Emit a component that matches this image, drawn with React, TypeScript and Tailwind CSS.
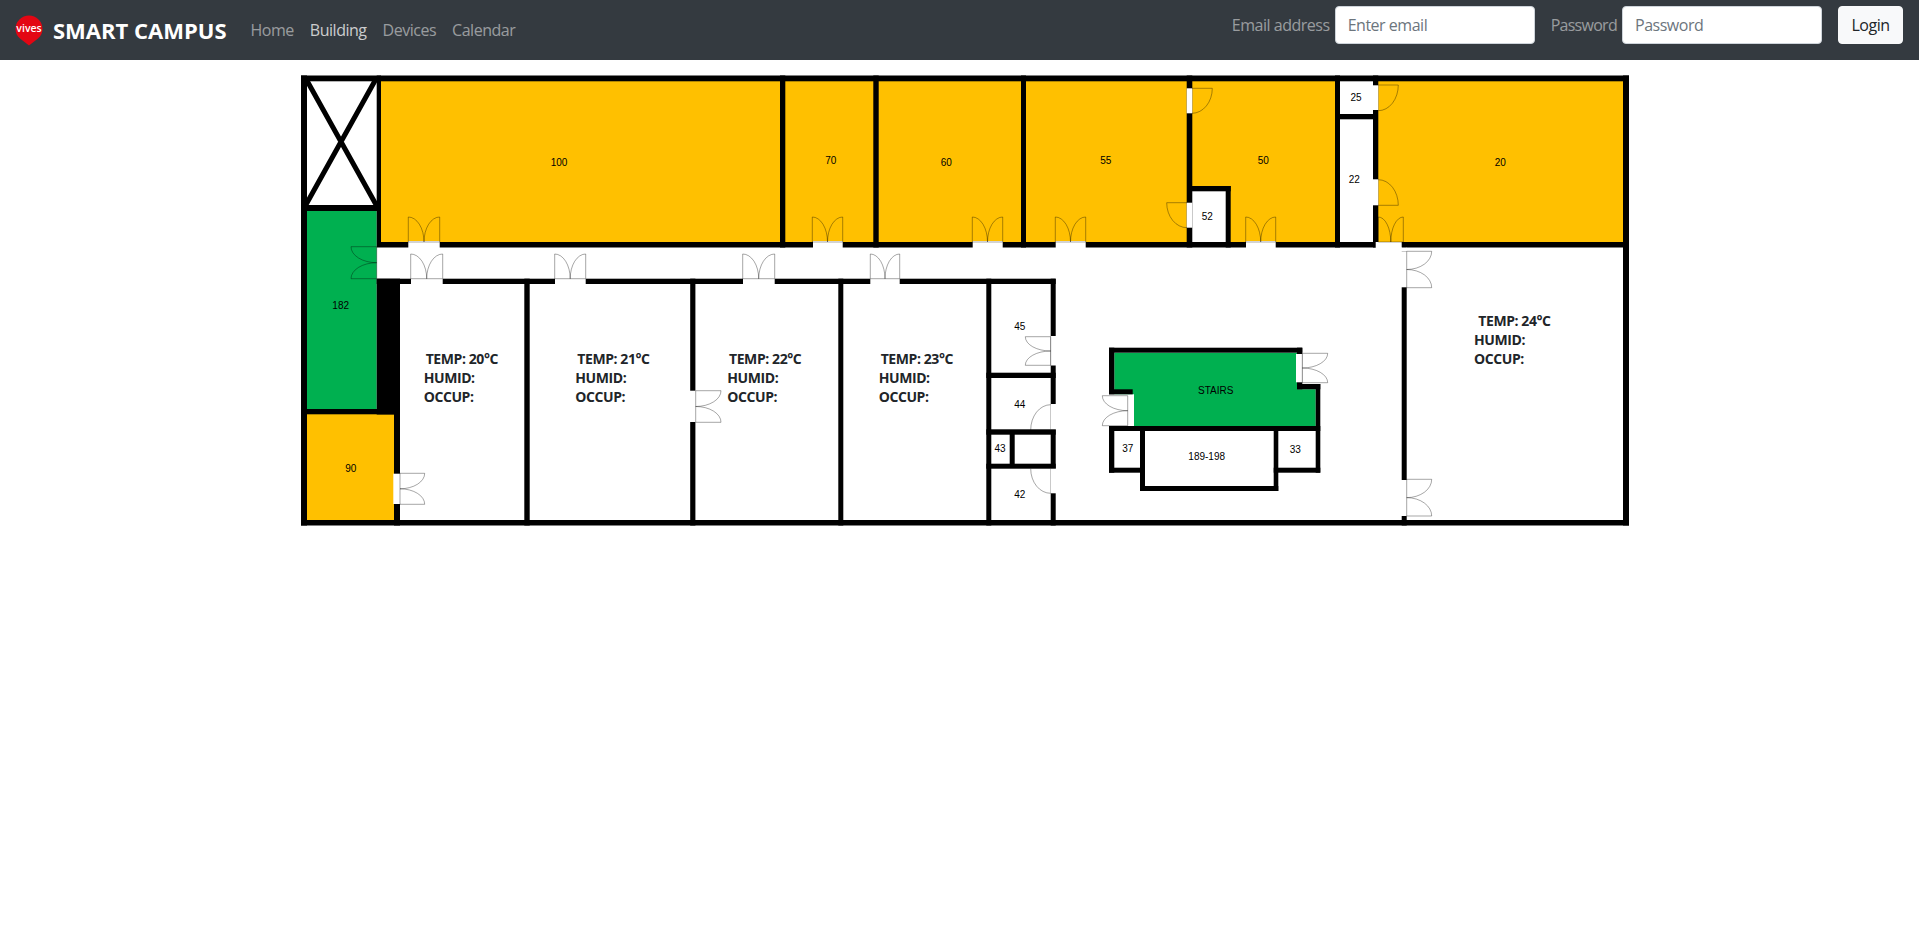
// Smart campus building page: navbar + floor plan drawing
type Box = [number, number, number, number];

const yellow: Box[] = [
  [381, 81, 1335, 242],
  [1378, 81, 1623, 242],
  [307, 414, 394, 520],
];

// black walls as x0, y0, x1, y1
const walls: Box[] = [
  [301, 75.5, 1629, 81.3],
  [301, 520, 1629, 525.5],
  [301, 75.5, 307, 525.5],
  [1623, 75.5, 1629, 525.5],
  [301, 205, 381, 211],
  [376.7, 75.5, 381, 247.5],
  [381, 242, 1629, 247.5],
  [780, 75.5, 785.3, 247.5],
  [873.3, 75.5, 878.7, 247.5],
  [1021, 75.5, 1026, 247.5],
  [1186.7, 75.5, 1192.3, 247.5],
  [1192, 186, 1230.7, 191.3],
  [1225.7, 186, 1230.7, 247.5],
  [1335, 75.5, 1340, 247.5],
  [1340, 114, 1378, 119.3],
  [1373, 75.5, 1378.3, 247.5],
  [1401.7, 242, 1406.7, 525.5],
  // corridor south wall
  [376.7, 278.7, 1055.7, 284],
  [376.7, 278.7, 400, 414.5],
  [307, 409, 400, 414.3],
  [394, 409, 400, 525.5],
  [524.3, 278.7, 529.7, 525.5],
  [690.2, 278.7, 695.4, 525.5],
  [838.3, 278.7, 843.3, 525.5],
  [986.3, 278.7, 991.3, 525.5],
  [1050.7, 278.7, 1055.7, 525.5],
  [986.3, 372.7, 1055.7, 378],
  [986.3, 429.3, 1055.7, 434.7],
  [986.3, 463.7, 1055.7, 468.7],
  [1009.7, 430, 1014.7, 468],
  // stair core
  [1109, 347.7, 1302.3, 352.7],
  [1109, 347.7, 1114.3, 394.3],
  [1109, 389.3, 1132.7, 394.3],
  [1297, 347.7, 1302.3, 389.3],
  [1297, 384, 1320.3, 389.3],
  [1315.7, 384, 1320.3, 472.7],
  [1109, 426, 1320.3, 431],
  [1109, 426, 1114.3, 472.7],
  [1109, 467.7, 1145, 472.7],
  [1140, 426, 1145, 491],
  [1140, 486, 1278.3, 491],
  [1273.7, 426, 1278.3, 491],
  [1273.7, 467.7, 1320.3, 472.7],
];

// openings cut out of the walls
const gaps: Box[] = [
  [408.3, 241, 439.7, 248],
  [813, 241, 842.7, 248],
  [972.7, 241, 1002.7, 248],
  [1055.7, 241, 1085.7, 248],
  [1246, 241, 1275.7, 248],
  [1375.7, 242, 1401.7, 248],
  [1401, 247.5, 1407, 251.3],
  [411, 278, 442.7, 284.5],
  [555, 278, 585.7, 284.5],
  [743, 278, 774.7, 284.5],
  [870.3, 278, 899.7, 284.5],
  [1186.7, 88.3, 1192.3, 113.3],
  [1186.7, 202.7, 1192.3, 227.7],
  [1373, 85.3, 1378.3, 110],
  [1373, 179.3, 1378.3, 205.3],
  [1401, 251.3, 1407, 287.3],
  [1401, 480, 1407, 516],
  [393.3, 473.7, 400, 504],
  [690, 390.7, 696, 422],
  [1050.7, 336, 1056, 365.5],
  [1050.7, 404, 1056, 429.3],
  [1050.7, 468.7, 1056, 493.3],
  [1296, 354, 1302.5, 382.3],
  [1127.7, 396, 1134, 425.5],
];

const upDoors: Box[] = [
  [408.3, 217, 439.7, 242],
  [812.3, 217, 842.7, 242],
  [972.3, 217, 1002.7, 242],
  [1055.3, 217, 1085.7, 242],
  [1245.7, 217, 1275.7, 242],
  [1378.3, 217, 1403.3, 242],
  [410.7, 254, 442.7, 278.7],
  [554.7, 254, 585.7, 278.7],
  [742.7, 254, 774.7, 278.7],
  [870.3, 254, 899.7, 278.7],
];

// hinge side x, far x, top y, bottom y
const sideDoors: Box[] = [
  [376.7, 351, 246.7, 278.7],
  [400, 424.7, 473.3, 504.3],
  [695.7, 721, 390.7, 422.3],
  [1050.7, 1025.3, 336.7, 365.3],
  [1302.3, 1327.7, 353.3, 382.7],
  [1127.7, 1102.3, 395.7, 425.7],
  [1406.7, 1431.7, 251.3, 287.7],
  [1406.7, 1431.7, 479.3, 516],
];

const singleDoors = [
  "M1192 88.3H1212.3A20.3 25 0 0 1 1192 113.3",
  "M1187 202.7H1166.7A20.3 25 0 0 0 1187 227.7",
  "M1378.3 85H1398.3A20 25.7 0 0 1 1378.3 110.7",
  "M1378.3 179.7A20 25.6 0 0 1 1398.3 205.3H1378.3",
  "M1050.7 404.7A20 25.3 0 0 0 1030.7 430",
  "M1030.7 468.7A20 24.6 0 0 0 1050.7 493.3",
];

const labels: [string, number, number][] = [
  ["100", 559, 162.7],
  ["182", 340.7, 305.7],
  ["90", 350.7, 468.7],
  ["70", 830.7, 160.3],
  ["60", 946.3, 162.3],
  ["55", 1105.7, 160.3],
  ["50", 1263.3, 160.3],
  ["52", 1207.3, 216.3],
  ["25", 1356, 97.3],
  ["22", 1354.3, 179.3],
  ["20", 1500.3, 162.3],
  ["45", 1019.7, 326.3],
  ["44", 1019.7, 404.7],
  ["43", 1000, 448.3],
  ["42", 1019.7, 494.3],
  ["STAIRS", 1215.7, 390.3],
  ["37", 1127.7, 448.3],
  ["33", 1295.3, 449.3],
  ["189-198", 1206.7, 456.7],
];

// x of TEMP, x of the other two lines, y of first line, temperature
const readings: [number, number, number, string][] = [
  [425.7, 423.7, 364, "20"],
  [577.3, 575.3, 364, "21"],
  [729, 727.3, 364, "22"],
  [880.7, 878.7, 364, "23"],
  [1478.3, 1474, 326, "24"],
];

function Rect({ b, fill }: { b: Box; fill: string }) {
  return <rect x={b[0]} y={b[1]} width={b[2] - b[0]} height={b[3] - b[1]} fill={fill} />;
}

function FloorPlan() {
  return (
    <svg
      viewBox="300 75 1332 452"
      width={1332}
      height={452}
      className="block ml-[300px] mt-[15px] font-['Liberation_Sans',sans-serif]"
    >
      {yellow.map((b, i) => (
        <Rect key={i} b={b} fill="#FFC000" />
      ))}
      <path d="M307 211H376.7V409H307Z" fill="#00B050" />
      <path
        d="M1114.3 352.7H1297V389.3H1315.7V426H1134V394.3H1114.3Z"
        fill="#00B050"
      />
      <rect x={1192} y={191} width={34} height={51} fill="#fff" />
      {walls.map((b, i) => (
        <Rect key={i} b={b} fill="#000" />
      ))}
      <path d="M305.5 78L376.5 205.5M376.5 78L305.5 205.5" stroke="#000" strokeWidth={5} />
      {gaps.map((b, i) => (
        <Rect key={i} b={b} fill="#fff" />
      ))}

      <g fill="none" stroke="#000" strokeOpacity={0.35} strokeWidth={1}>
        {upDoors.map(([x0, y0, x1, y1], i) => {
          const rx = (x1 - x0) / 2;
          const ry = y1 - y0;
          return (
            <path
              key={i}
              d={`M${x0} ${y1}V${y0}A${rx} ${ry} 0 0 1 ${x0 + rx} ${y1}M${x1} ${y1}V${y0}A${rx} ${ry} 0 0 0 ${x0 + rx} ${y1}M${x0} ${y1}H${x1}`}
            />
          );
        })}
        {sideDoors.map(([xw, xf, y0, y1], i) => {
          const rx = Math.abs(xw - xf);
          const ry = (y1 - y0) / 2;
          const s = xf < xw ? 0 : 1;
          return (
            <path
              key={i}
              d={`M${xw} ${y0}H${xf}A${rx} ${ry} 0 0 ${s} ${xw} ${y0 + ry}M${xw} ${y1}H${xf}A${rx} ${ry} 0 0 ${1 - s} ${xw} ${y0 + ry}M${xw} ${y0}V${y1}`}
            />
          );
        })}
        {singleDoors.map((d, i) => (
          <path key={i} d={d} />
        ))}
      </g>

      {labels.map(([t, x, y]) => (
        <text key={t} x={x} y={y} textAnchor="middle" dominantBaseline="central" className="text-[10px] fill-black">
          {t}
        </text>
      ))}

      <g className="font-['Open_Sans',sans-serif] font-bold text-[14px] tracking-[-0.03em] fill-[#212529]">
        {readings.map(([tx, x, y, temp]) => (
          <g key={temp}>
            <text x={tx} y={y}>{`TEMP: ${temp}°C`}</text>
            <text x={x} y={y + 19}>HUMID:</text>
            <text x={x} y={y + 38}>OCCUP:</text>
          </g>
        ))}
      </g>
    </svg>
  );
}

function Logo() {
  return (
    <svg width={28} height={31} viewBox="0 0 28 31" className="block">
      <path
        d="M14 30.5L5 23.5C2 21 0.5 17.5 0.5 14A13.5 13.5 0 0 1 27.5 14C27.5 17.5 26 21 23 23.5Z"
        fill="#E30613"
      />
      <text x={14} y={16.5} textAnchor="middle" fill="#fff" className="text-[10.5px] font-semibold">
        vives
      </text>
    </svg>
  );
}

export default function App() {
  return (
    <div className="min-h-[945px] bg-white font-['Open_Sans',sans-serif] text-[16px]">
      <nav className="h-[60px] bg-[#343a40] flex items-center pl-[15px] pr-4">
        <div className="flex items-center gap-[10px] mr-4">
          <Logo />
          <span className="text-white font-bold text-[22px]">SMART CAMPUS</span>
        </div>
        <div className="flex items-center tracking-[-0.03em]">
          <a className="px-2 text-white/50">Home</a>
          <a className="px-2 text-white/75">Building</a>
          <a className="px-2 text-white/50">Devices</a>
          <a className="px-2 text-white/50">Calendar</a>
        </div>

        <form className="ml-auto mb-[10px] flex items-center tracking-[-0.03em]">
          <label className="text-white/50 mr-[5px] tracking-[-0.03em]">Email address</label>
          <input
            placeholder="Enter email"
            className="w-[200px] h-[38px] px-3 bg-white border border-[#ced4da] rounded placeholder:text-[#6c757d]"
          />
          <label className="text-white/50 ml-4 mr-[5px] tracking-[-0.045em]">Password</label>
          <input
            placeholder="Password"
            className="w-[200px] h-[38px] px-3 bg-white border border-[#ced4da] rounded placeholder:text-[#6c757d]"
          />
          <button
            type="button"
            className="ml-4 w-[65px] h-[38px] bg-[#f8f9fa] text-[#212529] border border-[#f8f9fa] rounded"
          >
            Login
          </button>
        </form>
      </nav>
      <FloorPlan />
    </div>
  );
}
